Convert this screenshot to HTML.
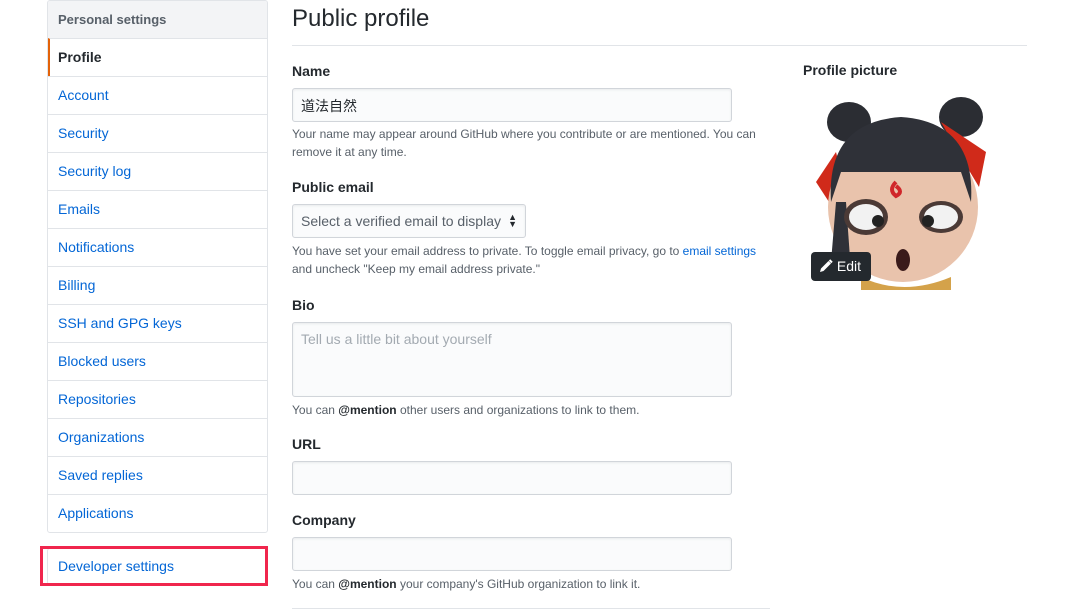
<!DOCTYPE html>
<html><head><meta charset="utf-8">
<style>
*{box-sizing:border-box;margin:0;padding:0}
body{width:1074px;height:609px;overflow:hidden;background:#fff;font-family:"Liberation Sans","Noto Sans CJK SC",sans-serif;color:#24292e;position:relative}
.a{position:absolute}
.side{left:47px;top:0px;width:221px;border:1px solid #e1e4e8;border-radius:3px;overflow:hidden}
.side div{height:38px;line-height:37px;padding-left:10px;border-top:1px solid #e1e4e8;font-size:14px;color:#0366d6}
.side div.h{border-top:0;background:#f3f4f6;color:#586069;font-weight:bold;font-size:13px;height:37px}
.side div.p{color:#24292e;font-weight:bold;border-left:2px solid #e36209;padding-left:8px}
.lbl{font-size:14px;font-weight:bold;left:292px}
.inp{left:292px;border:1px solid #d1d5da;border-radius:3px;background:#fafbfc;box-shadow:inset 0 1px 2px rgba(27,31,35,.075)}
.note{left:292px;font-size:12px;color:#586069;line-height:18px}
</style></head><body>
<div class="a side">
<div class="h">Personal settings</div>
<div class="p">Profile</div>
<div>Account</div><div>Security</div><div>Security log</div><div>Emails</div><div>Notifications</div><div>Billing</div><div>SSH and GPG keys</div><div>Blocked users</div><div>Repositories</div><div>Organizations</div><div>Saved replies</div><div>Applications</div>
</div>
<div class="a" style="left:47px;top:548px;width:221px;height:37px;border:1px solid #e1e4e8;border-radius:3px"></div>
<div class="a" style="left:40px;top:546px;width:228px;height:40px;border:3px solid #f0264d"></div>
<div class="a" style="left:58px;top:558px;font-size:14px;color:#0366d6">Developer settings</div>

<div class="a" style="left:292px;top:5px;font-size:24px">Public profile</div>
<div class="a" style="left:292px;top:45px;width:735px;height:1px;background:#e1e4e8"></div>

<div class="a lbl" style="top:63px">Name</div>
<div class="a inp" style="top:88px;width:440px;height:34px;font-size:14px;padding:7px 8px;color:#24292e">道法自然</div>
<div class="a note" style="top:125px">Your name may appear around GitHub where you contribute or are mentioned. You can<br>remove it at any time.</div>

<div class="a lbl" style="top:179px">Public email</div>
<div class="a inp" style="top:204px;width:234px;height:34px;font-size:14px;padding:8px;color:#586069">Select a verified email to display<span style="position:absolute;right:8px;top:9px;font-size:9px;line-height:7px;color:#24292e">▲<br>▼</span></div>
<div class="a note" style="top:242px">You have set your email address to private. To toggle email privacy, go to <span style="color:#0366d6">email settings</span><br>and uncheck "Keep my email address private."</div>

<div class="a lbl" style="top:297px">Bio</div>
<div class="a inp" style="top:322px;width:440px;height:75px;font-size:14px;padding:8px 8px;color:#a3aab1">Tell us a little bit about yourself</div>
<div class="a note" style="top:401px">You can <b style="color:#24292e">@mention</b> other users and organizations to link to them.</div>

<div class="a lbl" style="top:436px">URL</div>
<div class="a inp" style="top:461px;width:440px;height:34px"></div>
<div class="a lbl" style="top:512px">Company</div>
<div class="a inp" style="top:537px;width:440px;height:34px"></div>
<div class="a note" style="top:575px">You can <b style="color:#24292e">@mention</b> your company's GitHub organization to link it.</div>
<div class="a" style="left:292px;top:608px;width:478px;height:1px;background:#e1e4e8"></div>

<div class="a" style="left:803px;top:62px;font-size:14px;font-weight:bold">Profile picture</div>
<svg class="a" style="left:811px;top:92px" width="180" height="198" viewBox="0 0 180 198">
<ellipse cx="38" cy="30" rx="22" ry="20" fill="#2b2d33"/>
<ellipse cx="150" cy="25" rx="22" ry="20" fill="#2b2d33"/>
<path d="M130 30 L175 60 L168 95 L150 65Z" fill="#d02a1a"/>
<path d="M25 60 L5 90 L18 110 L30 80Z" fill="#d02a1a"/>
<ellipse cx="92" cy="115" rx="75" ry="75" fill="#e9c3ac"/>
<path d="M20 110 Q15 30 90 25 Q165 30 160 110 L150 80 L30 80Z" fill="#2f3138"/>
<path d="M25 110 L20 170 L40 180 L35 110Z" fill="#2f3138"/>
<ellipse cx="55" cy="125" rx="22" ry="18" fill="#4b3a36"/>
<ellipse cx="55" cy="125" rx="17" ry="13" fill="#f2f2f2"/>
<circle cx="67" cy="129" r="6" fill="#222"/>
<ellipse cx="130" cy="125" rx="22" ry="16" fill="#4b3a36"/>
<ellipse cx="130" cy="125" rx="17" ry="12" fill="#f2f2f2"/>
<circle cx="117" cy="129" r="6" fill="#222"/>
<path d="M85 90 q-8 8 0 14 q8 -4 0 -10" stroke="#d0262a" stroke-width="4" fill="none"/>
<ellipse cx="92" cy="168" rx="7" ry="11" fill="#3a1a1a"/>
<path d="M50 185 Q92 205 140 185 L140 198 L50 198Z" fill="#d4a24a"/>
</svg>
<div class="a" style="left:811px;top:252px;width:60px;height:29px;background:#24292e;border-radius:4px;color:#fff;font-size:14px;line-height:29px;padding-left:8px">
<svg width="14" height="14" viewBox="0 0 14 14" style="vertical-align:-2px"><path d="M1 13 L2 9.5 L9.5 2 L12 4.5 L4.5 12Z" fill="#fff"/><path d="M10.5 1 L13 3.5" stroke="#fff" stroke-width="2"/></svg> Edit</div>
</body></html>
